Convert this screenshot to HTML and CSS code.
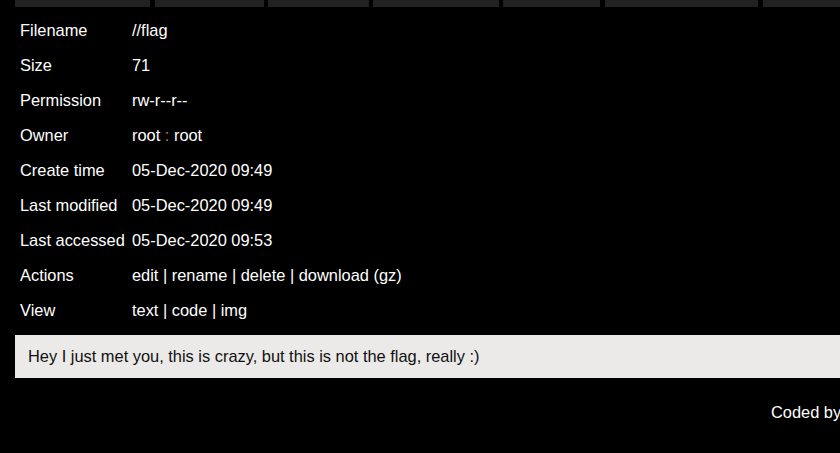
FILE: index.html
```html
<!DOCTYPE html>
<html>
<head>
<meta charset="utf-8">
<link rel="stylesheet" href="styles.css">
</head>
<body>
<div class="page">
  <div class="tabs">
    <div class="tab t1"></div>
    <div class="tab t2"></div>
    <div class="tab t3"></div>
    <div class="tab t4"></div>
    <div class="tab t5"></div>
    <div class="tab t6"></div>
    <div class="tab t7"></div>
  </div>
  <div class="info">
    <div class="label">Filename</div><div class="value">//flag</div>
    <div class="label">Size</div><div class="value">71</div>
    <div class="label">Permission</div><div class="value">rw-r--r--</div>
    <div class="label">Owner</div><div class="value">root <span class="sep">:</span> root</div>
    <div class="label">Create time</div><div class="value">05-Dec-2020 09:49</div>
    <div class="label">Last modified</div><div class="value">05-Dec-2020 09:49</div>
    <div class="label">Last accessed</div><div class="value">05-Dec-2020 09:53</div>
    <div class="label">Actions</div><div class="value">edit | rename | delete | download (gz)</div>
    <div class="label">View</div><div class="value">text | code | img</div>
  </div>
  <div class="content">Hey I just met you, this is crazy, but this is not the flag, really :)</div>
  <div class="footer">Coded by</div>
</div>
</body>
</html>
```
FILE: styles.css
```css
html, body {
  margin: 0;
  padding: 0;
  background: #000;
  overflow: hidden;
}
body {
  font-family: "Liberation Sans", Arial, sans-serif;
  font-size: 16.4px;
  color: #fff;
}
.page {
  width: 900px;
  padding-left: 15px;
}
.tabs {
  display: flex;
  height: 7px;
}
.tab {
  background: #222;
  height: 7px;
  margin-right: 5px;
}
.t1 { width: 135px; }
.t2 { width: 109px; margin-right: 4px; }
.t3 { width: 101px; margin-right: 4px; }
.t4 { width: 126px; margin-right: 4px; }
.t5 { width: 97px; margin-right: 5px; }
.t6 { width: 153px; }
.t7 { width: 120px; }
.info {
  display: grid;
  grid-template-columns: 117px auto;
  margin-top: 6px;
}
.label, .value {
  height: 35px;
  line-height: 35px;
  white-space: nowrap;
}
.label {
  padding-left: 5px;
}
.sep {
  color: #888;
}
.content {
  margin-top: 7px;
  background: #ebeae8;
  color: #111;
  height: 43px;
  line-height: 43px;
  padding-left: 13px;
  white-space: nowrap;
}
.footer {
  margin-top: 25px;
  padding-left: 756px;
  line-height: 18px;
  white-space: nowrap;
}
```
